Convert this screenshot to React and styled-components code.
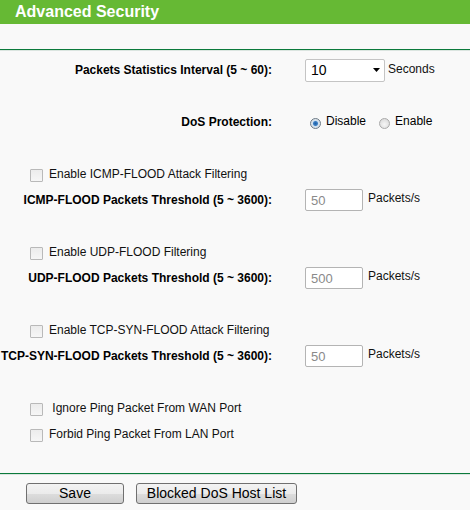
import React from "react";
import styled, { createGlobalStyle } from "styled-components";

const Global = createGlobalStyle`
  html, body {
    margin: 0;
    padding: 0;
    background: #f9f9f9;
    font-family: "Liberation Sans", Arial, sans-serif;
    color: #000;
  }
  #root { width: 470px; min-height: 510px; background: #f9f9f9; }
`;

const Page = styled.div`
  width: 470px;
  height: 510px;
  overflow: hidden;
  display: flex;
  flex-direction: column;
`;

const TitleBar = styled.div`
  height: 24px;
  background: #66b934;
  display: flex;
  align-items: center;
  padding-left: 15px;
`;

const Title = styled.h1`
  margin: 0;
  font-size: 16px;
  font-weight: bold;
  color: #fff;
  line-height: 24px;
`;

const Divider = styled.div`
  height: 1px;
  background: #0b7a3b;
  border-bottom: 1px solid #dbe5e0;
  margin-top: ${(p) => p.$top}px;
`;

const Form = styled.div`
  display: flex;
  flex-direction: column;
  padding-top: 6px;
`;

const Row = styled.div`
  height: 26px;
  display: grid;
  grid-template-columns: 272px 1fr;
  column-gap: 33px;
  align-items: center;
  margin-bottom: ${(p) => (p.$gap ? 26 : 0)}px;
`;

const Label = styled.div`
  display: flex;
  justify-content: flex-end;
  white-space: nowrap;
  font-size: 12px;
  font-weight: bold;
`;

const Value = styled.div`
  display: flex;
  align-items: center;
`;

const SelectBox = styled.div`
  border: 1px solid #c4c4c4;
  border-radius: 2px;
  background: #fff;
  display: flex;
  align-items: center;
  justify-content: space-between;
  padding: 0 4px 0 5px;
  box-sizing: border-box;
  width: 80px;
  height: 23px;
  font-size: 14px;
`;

const Unit = styled.span`
  font-size: 12px;
  margin-left: ${(p) => p.$ml || 3}px;
  margin-top: ${(p) => p.$mt || 0}px;
  color: #111;
`;

const Radio = styled.span`
  width: 11px;
  height: 11px;
  box-sizing: border-box;
  border-radius: 50%;
  border: 1px solid ${(p) => (p.$on ? "#6c7a86" : "#a9a9a9")};
  background: ${(p) =>
    p.$on
      ? "radial-gradient(circle, #1d5fa5 0, #3b7fc4 2px, #cfe0ef 3px, #e6e6e6 5px)"
      : "radial-gradient(circle at 50% 60%, #f6f6f6 0, #dedede 5px)"};
  margin: 2px ${(p) => p.$mr}px 0 ${(p) => p.$ml}px;
  flex: none;
`;

const RadioText = styled.span`
  font-size: 12px;
  margin-top: -2px;
`;

const TextInput = styled.input`
  width: 58px;
  height: 22px;
  box-sizing: border-box;
  border: 1px solid #b4b4b4;
  border-radius: 2px;
  background: #fff;
  padding: 0 5px;
  font-family: "Liberation Sans", Arial, sans-serif;
  font-size: 13px;
  color: #8a8a8a;
  outline: none;
`;

const CheckRow = styled.div`
  height: 26px;
  display: flex;
  align-items: center;
  padding-left: 30px;
  margin-bottom: ${(p) => (p.$gap ? 26 : 0)}px;
`;

const Box = styled.span`
  width: 13px;
  height: 13px;
  box-sizing: border-box;
  border: 1px solid #b9b9b9;
  border-radius: 1px;
  background: linear-gradient(#ececec, #f6f6f6);
  margin-right: 6px;
  margin-top: 2px;
  flex: none;
`;

const CheckText = styled.span`
  font-size: 12px;
  color: #111;
  white-space: pre;
`;

const Buttons = styled.div`
  display: flex;
  gap: 12px;
  padding: 8px 0 0 26px;
`;

const Button = styled.button`
  width: ${(p) => p.$w}px;
  height: 21px;
  box-sizing: border-box;
  border: 1px solid #707070;
  border-radius: 3px;
  background: linear-gradient(#f3f3f3 0%, #ebebeb 50%, #dddddd 51%, #cfcfcf 100%);
  font-family: "Liberation Sans", Arial, sans-serif;
  font-size: 14px;
  color: #000;
  padding: 0;
  line-height: 19px;
`;

const Arrow = () => (
  <svg width="7" height="4" viewBox="0 0 7 4">
    <path d="M0 0 H7 L3.5 4 Z" fill="#000" />
  </svg>
);

function Check({ text, gap }) {
  return (
    <CheckRow $gap={gap}>
      <Box />
      <CheckText>{text}</CheckText>
    </CheckRow>
  );
}

function Threshold({ label, value }) {
  return (
    <Row $gap>
      <Label>{label}</Label>
      <Value>
        <TextInput readOnly value={value} />
        <Unit $ml={5} $mt={-5}>Packets/s</Unit>
      </Value>
    </Row>
  );
}

export default function App() {
  return (
    <Page>
      <Global />
      <TitleBar>
        <Title>Advanced Security</Title>
      </TitleBar>
      <Divider $top={25} />
      <Form>
        <Row $gap>
          <Label>Packets Statistics Interval (5 ~ 60):</Label>
          <Value>
            <SelectBox>
              <span>10</span>
              <Arrow />
            </SelectBox>
            <Unit $mt={-3}>Seconds</Unit>
          </Value>
        </Row>
        <Row $gap>
          <Label>DoS Protection:</Label>
          <Value>
            <Radio $on $ml={5} $mr={5} />
            <RadioText>Disable</RadioText>
            <Radio $ml={13} $mr={5} />
            <RadioText>Enable</RadioText>
          </Value>
        </Row>
        <Check text="Enable ICMP-FLOOD Attack Filtering" />
        <Threshold label="ICMP-FLOOD Packets Threshold (5 ~ 3600):" value="50" />
        <Check text="Enable UDP-FLOOD Filtering" />
        <Threshold label="UDP-FLOOD Packets Threshold (5 ~ 3600):" value="500" />
        <Check text="Enable TCP-SYN-FLOOD Attack Filtering" />
        <Threshold label="TCP-SYN-FLOOD Packets Threshold (5 ~ 3600):" value="50" />
        <Check text=" Ignore Ping Packet From WAN Port" />
        <Check text="Forbid Ping Packet From LAN Port" gap />
      </Form>
      <Divider $top={0} />
      <Buttons>
        <Button $w={98}>Save</Button>
        <Button $w={161}>Blocked DoS Host List</Button>
      </Buttons>
    </Page>
  );
}
